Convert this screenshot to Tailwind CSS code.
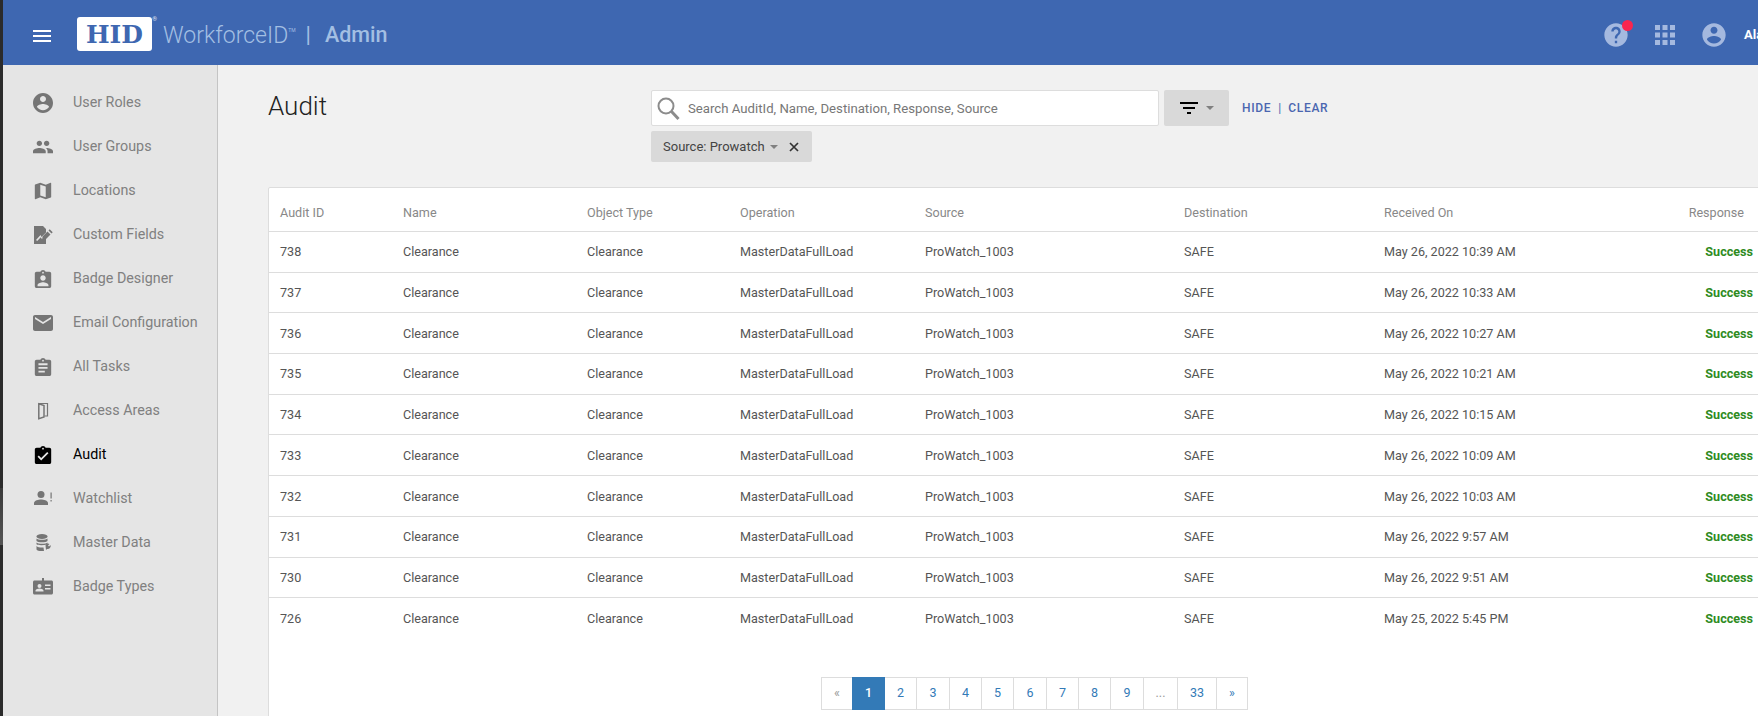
<!DOCTYPE html>
<html lang="en">
<head>
  <meta charset="UTF-8">
  <title>WorkforceID Admin - Audit</title>
  <script src="https://cdn.jsdelivr.net/npm/@tailwindcss/browser@4"></script>
</head>
<body class="h-[716px] w-[1758px] overflow-hidden bg-[#f1f1f1] font-['Roboto',sans-serif]">
  <div class="flex h-full">
    <!-- dark strip on the left edge -->
    <div class="flex h-full w-[3px] shrink-0 flex-col bg-[#2b2b2b]">
      <div class="mt-[488px] h-[57px] bg-gradient-to-b from-[#3a3a3a] to-[#555]"></div>
    </div>

    <div class="flex min-w-0 flex-1 flex-col">
      <!-- Header -->
      <header class="flex h-[65px] shrink-0 items-center bg-[#3e67b1] pt-[5px]">
        <svg class="mt-[1px] ml-[30px] h-3 w-[18px]" viewBox="0 0 18 12" fill="#fff"><path d="M0 0h18v2H0zM0 5h18v2H0zM0 10h18v2H0z"/></svg>
        <div class="relative -mt-[2px] ml-[26px] flex h-[34px] w-[75px] items-center justify-center rounded-[3px] bg-white">
          <span class="font-['DejaVu_Serif',serif] text-[25px] leading-none font-black text-[#3e67b1]">HID</span>
          <span class="absolute -top-[1px] -right-[5px] text-[6px] leading-none text-white/80">®</span>
        </div>
        <span class="ml-[11px] text-[23px] leading-none font-light text-[#a3bfe3]">WorkforceID</span>
        <span class="mb-[10px] text-[5px] leading-none text-[#a3bfe3]">TM</span>
        <span class="ml-[10px] text-[22px] leading-none text-[#a3bfe3]">|</span>
        <span class="ml-[14px] text-[21.500px] leading-none font-medium text-[#a3bfe3]">Admin</span>

        <div class="relative mr-[-27px] ml-auto flex items-center">
          <div class="relative">
            <svg class="h-7 w-7" viewBox="0 0 24 24" fill="#a5b9df"><path d="M12 2C6.48 2 2 6.48 2 12s4.48 10 10 10 10-4.48 10-10S17.52 2 12 2zm1 17h-2v-2h2v2zm2.07-7.75l-.9.92C13.45 12.9 13 13.5 13 15h-2v-.5c0-1.1.45-2.1 1.17-2.83l1.24-1.26c.37-.36.59-.86.59-1.41 0-1.1-.9-2-2-2s-2 .9-2 2H8c0-2.21 1.79-4 4-4s4 1.79 4 4c0 .88-.36 1.68-.93 2.25z"/></svg>
            <span class="absolute -top-[1px] -right-[3px] h-[11px] w-[11px] rounded-full bg-[#f9264f]"></span>
          </div>
          <svg class="ml-[25px] h-5 w-5" viewBox="0 0 20 20" fill="#a5b9df"><path d="M0 0h5v5H0zM7.5 0h5v5h-5zM15 0h5v5h-5zM0 7.5h5v5H0zM7.5 7.5h5v5h-5zM15 7.5h5v5h-5zM0 15h5v5H0zM7.5 15h5v5h-5zM15 15h5v5h-5z"/></svg>
          <svg class="ml-[25px] h-7 w-7" viewBox="0 0 24 24" fill="#a5b9df"><path d="M12 2C6.48 2 2 6.48 2 12s4.48 10 10 10 10-4.48 10-10S17.52 2 12 2zm0 3c1.66 0 3 1.34 3 3s-1.34 3-3 3-3-1.34-3-3 1.34-3 3-3zm0 14.2c-2.5 0-4.71-1.28-6-3.22.03-1.99 4-3.08 6-3.08 1.99 0 5.97 1.09 6 3.08-1.29 1.94-3.5 3.22-6 3.22z"/></svg>
          <span class="ml-[16px] w-[41px] text-[13px] font-bold text-white">Alan</span>
        </div>
      </header>

      <div class="flex min-h-0 flex-1">
        <!-- Sidebar -->
        <nav class="h-full w-[215px] shrink-0 border-r border-[#c4c4c4] bg-[#e5e5e5] pt-4 text-[14.3px] text-[#808080]">
          <a class="flex h-11 items-center gap-5 pl-[30px]">
            <svg class="h-5 w-5" viewBox="2 2 20 20" fill="#757575"><path d="M12 2C6.48 2 2 6.48 2 12s4.48 10 10 10 10-4.48 10-10S17.52 2 12 2zm0 3c1.66 0 3 1.34 3 3s-1.34 3-3 3-3-1.34-3-3 1.34-3 3-3zm0 14.2c-2.5 0-4.71-1.28-6-3.22.03-1.99 4-3.08 6-3.08 1.99 0 5.97 1.09 6 3.08-1.29 1.94-3.5 3.22-6 3.22z"/></svg>
            User Roles
          </a>
          <a class="flex h-11 items-center gap-5 pl-[30px]">
            <svg class="h-5 w-5" viewBox="1 1 22 22" fill="#757575"><path d="M16 11c1.66 0 2.99-1.34 2.99-3S17.66 5 16 5c-1.66 0-3 1.34-3 3s1.34 3 3 3zm-8 0c1.66 0 2.99-1.34 2.99-3S9.66 5 8 5C6.34 5 5 6.34 5 8s1.34 3 3 3zm0 2c-2.33 0-7 1.17-7 3.5V19h14v-2.5c0-2.33-4.67-3.5-7-3.5zm8 0c-.29 0-.62.02-.97.05 1.16.84 1.97 1.97 1.97 3.45V19h6v-2.5c0-2.33-4.67-3.5-7-3.5z"/></svg>
            User Groups
          </a>
          <a class="flex h-11 items-center gap-5 pl-[30px]">
            <svg class="h-5 w-5" viewBox="1 2 22 20" fill="#757575"><path d="M20.5 3l-.16.03L15 5.1 9 3 3.36 4.9c-.21.07-.36.25-.36.48V20.5c0 .28.22.5.5.5l.16-.03L9 18.9l6 2.1 5.64-1.9c.21-.07.36-.25.36-.48V3.5c0-.28-.22-.5-.5-.5zM15 19l-6-2.11V5l6 2.11V19z"/></svg>
            Locations
          </a>
          <a class="flex h-11 items-center gap-5 pl-[30px]">
            <svg class="h-5 w-5" viewBox="0 0 20 20" fill="#757575"><path d="M1 1h9l3 3v3.5L8.5 12l-1-2L3 15l1.2 1L7.8 12.2l1.2 2L13 10.5V19H1z"/><path d="M14.5 6.5l3 3-5 5-3.2.3.2-3.3zM15.5 5.5l1.2-1.2 3 3-1.2 1.2z"/></svg>
            Custom Fields
          </a>
          <a class="flex h-11 items-center gap-5 pl-[30px]">
            <svg class="h-5 w-5" viewBox="1 0 22 22" fill="#757575"><path d="M19 3h-4.18C14.4 1.84 13.3 1 12 1c-1.3 0-2.4.84-2.82 2H5c-1.1 0-2 .9-2 2v14c0 1.1.9 2 2 2h14c1.1 0 2-.9 2-2V5c0-1.1-.9-2-2-2zm-7 0c.55 0 1 .45 1 1s-.45 1-1 1-1-.45-1-1 .45-1 1-1zm0 4c1.66 0 3 1.34 3 3s-1.34 3-3 3-3-1.34-3-3 1.34-3 3-3zm6 12H6v-1.4c0-2 4-3.1 6-3.1s6 1.1 6 3.1V19z"/></svg>
            Badge Designer
          </a>
          <a class="flex h-11 items-center gap-5 pl-[30px]">
            <svg class="h-5 w-5" viewBox="2 2 20 20" fill="#757575"><path d="M20 4H4c-1.1 0-1.99.9-1.99 2L2 18c0 1.1.9 2 2 2h16c1.1 0 2-.9 2-2V6c0-1.1-.9-2-2-2zm0 4l-8 5-8-5V6l8 5 8-5v2z"/></svg>
            Email Configuration
          </a>
          <a class="flex h-11 items-center gap-5 pl-[30px]">
            <svg class="h-5 w-5" viewBox="1 0 22 22" fill="#757575"><path d="M19 3h-4.18C14.4 1.84 13.3 1 12 1c-1.3 0-2.4.84-2.82 2H5c-1.1 0-2 .9-2 2v14c0 1.1.9 2 2 2h14c1.1 0 2-.9 2-2V5c0-1.1-.9-2-2-2zm-7 0c.55 0 1 .45 1 1s-.45 1-1 1-1-.45-1-1 .45-1 1-1zm2 14H7v-2h7v2zm3-4H7v-2h10v2zm0-4H7V7h10v2z"/></svg>
            All Tasks
          </a>
          <a class="flex h-11 items-center gap-5 pl-[30px]">
            <svg class="h-5 w-5" viewBox="0 0 20 20" fill="none" stroke="#757575"><path d="M6 2.500h8.500v12.500H11.500" stroke-width="1.200"/><path d="M5.800 2.800v15l5.200-1.800V4.500z" stroke-width="1.500"/></svg>
            Access Areas
          </a>
          <a class="flex h-11 items-center gap-5 pl-[30px] text-black">
            <svg class="h-5 w-5" viewBox="1 0 22 22" fill="#000"><path d="M19 3h-4.18C14.4 1.84 13.3 1 12 1c-1.3 0-2.4.84-2.82 2H5c-1.1 0-2 .9-2 2v14c0 1.1.9 2 2 2h14c1.1 0 2-.9 2-2V5c0-1.1-.9-2-2-2zm-7 0c.55 0 1 .45 1 1s-.45 1-1 1-1-.45-1-1 .45-1 1-1zm-2 14l-4-4 1.41-1.41L10 14.17l6.59-6.59L18 9l-8 8z"/></svg>
            Audit
          </a>
          <a class="flex h-11 items-center gap-5 pl-[30px]">
            <svg class="h-5 w-5" viewBox="0 0 20 20" fill="#757575"><circle cx="8" cy="5.5" r="3.5"/><path d="M1 16v-2c0-2.4 4.6-3.5 7-3.5s7 1.1 7 3.5v2z"/><path d="M17.5 3.500h1.200v6h-1.200zM17.5 11h1.200v1.600h-1.200z"/></svg>
            Watchlist
          </a>
          <a class="flex h-11 items-center gap-5 pl-[30px]">
            <svg class="h-5 w-5" viewBox="0 0 20 20" fill="#757575"><ellipse cx="9" cy="3.5" rx="5.5" ry="2.5"/><path d="M3.5 5.5c1 1.7 10 1.7 11 0V8c-1 1.7-10 1.700-11 0zM3.5 9.5c1 1.7 10 1.7 11 0v2c-5 1-9 1-11-.2zM3.500 13c1 1.500 5 1.800 7 1.500l.5 3.500c-3 .3-7 0-7.500-1.500z"/><path d="M12.500 12.500a3 3 0 0 1 4-1.500l-1.500 1.500 1 1 1.500-1.500a3 3 0 0 1-3.500 4l-1 1z"/></svg>
            Master Data
          </a>
          <a class="flex h-11 items-center gap-5 pl-[30px]">
            <svg class="h-5 w-5" viewBox="0 0 20 20" fill="#757575" fill-rule="evenodd"><path d="M1.500 3.500h7.500V1h2v2.500h7.500c.8 0 1.500.7 1.500 1.500v11c0 .8-.7 1.500-1.500 1.500h-17C.700 17.500 0 16.800 0 16V5c0-.8.700-1.500 1.500-1.500zM6.500 7a2 2 0 1 0 0 4 2 2 0 0 0 0-4zM2.500 14.500h8v-1c0-1.300-2.700-2-4-2s-4 .7-4 2zM12 7.500v1.500h5.500V7.500zM12 11v1.500h5.500V11z"/></svg>
            Badge Types
          </a>
        </nav>

        <!-- Main -->
        <main class="min-w-0 flex-1 pt-[25px] pl-[50px]">
          <div class="flex h-[97px]">
            <h1 class="w-[383px] pt-[1px] text-[26px] leading-[30px] font-light text-[#222]">Audit</h1>
            <div>
              <div class="flex items-center">
                <div class="flex h-9 w-[508px] items-center rounded-[2px] border border-[#ddd] bg-white pl-[3px]">
                  <svg class="h-[27px] w-[27px]" viewBox="0 0 27 27" fill="none" stroke="#8c8c8c"><circle cx="11" cy="11" r="7.500" stroke-width="2"/><path d="M16.500 16.500l7 7.500" stroke-width="3"/></svg>
                  <input class="mt-[2px] ml-[6px] w-[450px] text-[13.200px] outline-none placeholder:text-[#777]" placeholder="Search AuditId, Name, Destination, Response, Source">
                </div>
                <button class="ml-[5px] flex h-9 w-[65px] items-center justify-center gap-[8px] rounded-[2px] bg-[#d9d9d9]">
                  <svg class="h-[12px] w-[18px]" viewBox="0 0 18 12" fill="#000"><path d="M0 0h18v2H0zM3 5h12v2H3zM7 10h4v2H7z"/></svg>
                  <span class="h-0 w-0 border-x-[4px] border-t-[4px] border-x-transparent border-t-[#808080]"></span>
                </button>
                <a class="ml-[13px] text-[12px] font-medium tracking-[0.7px] text-[#4a66b0]">HIDE</a>
                <span class="mx-[7px] text-[12px] text-[#4a66b0]">|</span>
                <a class="text-[12px] font-medium tracking-[0.7px] text-[#4a66b0]">CLEAR</a>
              </div>
              <div class="mt-[5px] flex h-[31px] w-[161px] items-center rounded-[2px] bg-[#d9d9d9] pl-[12px] text-[13px] text-[#444]">
                Source: Prowatch
                <span class="ml-[5px] h-0 w-0 border-x-[4px] border-t-[4px] border-x-transparent border-t-[#808080]"></span>
                <svg class="ml-[11px] h-[10px] w-[10px]" viewBox="0 0 10 10" stroke="#333" stroke-width="1.700"><path d="M1 1l8 8M9 1l-8 8"/></svg>
              </div>
            </div>
          </div>

          <!-- Audit table card -->
          <section class="h-[700px] w-[1600px] rounded-[2px] border border-[#ddd] bg-white">
            <div class="grid h-[44px] grid-cols-[123px_184px_153px_185px_259px_200px_200px_169px] items-center border-b border-[#ddd] pt-[7px] pl-[11px] text-[12.600px] text-[#888]">
              <span>Audit ID</span><span>Name</span><span>Object Type</span><span>Operation</span><span>Source</span><span>Destination</span><span>Received On</span><span class="pr-[9px] text-right">Response</span>
            </div>
            <div class="grid h-[40.700px] grid-cols-[123px_184px_153px_185px_259px_200px_200px_169px] items-center border-b border-[#ddd] pt-[2px] pl-[11px] text-[12.600px] text-[#555]">
              <span>738</span><span>Clearance</span><span>Clearance</span><span>MasterDataFullLoad</span><span>ProWatch_1003</span><span>SAFE</span><span>May 26, 2022 10:39 AM</span><span class="text-right font-bold text-[#2e8b22]">Success</span>
            </div>
            <div class="grid h-[40.700px] grid-cols-[123px_184px_153px_185px_259px_200px_200px_169px] items-center border-b border-[#ddd] pt-[2px] pl-[11px] text-[12.600px] text-[#555]">
              <span>737</span><span>Clearance</span><span>Clearance</span><span>MasterDataFullLoad</span><span>ProWatch_1003</span><span>SAFE</span><span>May 26, 2022 10:33 AM</span><span class="text-right font-bold text-[#2e8b22]">Success</span>
            </div>
            <div class="grid h-[40.700px] grid-cols-[123px_184px_153px_185px_259px_200px_200px_169px] items-center border-b border-[#ddd] pt-[2px] pl-[11px] text-[12.600px] text-[#555]">
              <span>736</span><span>Clearance</span><span>Clearance</span><span>MasterDataFullLoad</span><span>ProWatch_1003</span><span>SAFE</span><span>May 26, 2022 10:27 AM</span><span class="text-right font-bold text-[#2e8b22]">Success</span>
            </div>
            <div class="grid h-[40.700px] grid-cols-[123px_184px_153px_185px_259px_200px_200px_169px] items-center border-b border-[#ddd] pt-[2px] pl-[11px] text-[12.600px] text-[#555]">
              <span>735</span><span>Clearance</span><span>Clearance</span><span>MasterDataFullLoad</span><span>ProWatch_1003</span><span>SAFE</span><span>May 26, 2022 10:21 AM</span><span class="text-right font-bold text-[#2e8b22]">Success</span>
            </div>
            <div class="grid h-[40.700px] grid-cols-[123px_184px_153px_185px_259px_200px_200px_169px] items-center border-b border-[#ddd] pt-[2px] pl-[11px] text-[12.600px] text-[#555]">
              <span>734</span><span>Clearance</span><span>Clearance</span><span>MasterDataFullLoad</span><span>ProWatch_1003</span><span>SAFE</span><span>May 26, 2022 10:15 AM</span><span class="text-right font-bold text-[#2e8b22]">Success</span>
            </div>
            <div class="grid h-[40.700px] grid-cols-[123px_184px_153px_185px_259px_200px_200px_169px] items-center border-b border-[#ddd] pt-[2px] pl-[11px] text-[12.600px] text-[#555]">
              <span>733</span><span>Clearance</span><span>Clearance</span><span>MasterDataFullLoad</span><span>ProWatch_1003</span><span>SAFE</span><span>May 26, 2022 10:09 AM</span><span class="text-right font-bold text-[#2e8b22]">Success</span>
            </div>
            <div class="grid h-[40.700px] grid-cols-[123px_184px_153px_185px_259px_200px_200px_169px] items-center border-b border-[#ddd] pt-[2px] pl-[11px] text-[12.600px] text-[#555]">
              <span>732</span><span>Clearance</span><span>Clearance</span><span>MasterDataFullLoad</span><span>ProWatch_1003</span><span>SAFE</span><span>May 26, 2022 10:03 AM</span><span class="text-right font-bold text-[#2e8b22]">Success</span>
            </div>
            <div class="grid h-[40.700px] grid-cols-[123px_184px_153px_185px_259px_200px_200px_169px] items-center border-b border-[#ddd] pt-[2px] pl-[11px] text-[12.600px] text-[#555]">
              <span>731</span><span>Clearance</span><span>Clearance</span><span>MasterDataFullLoad</span><span>ProWatch_1003</span><span>SAFE</span><span>May 26, 2022 9:57 AM</span><span class="text-right font-bold text-[#2e8b22]">Success</span>
            </div>
            <div class="grid h-[40.700px] grid-cols-[123px_184px_153px_185px_259px_200px_200px_169px] items-center border-b border-[#ddd] pt-[2px] pl-[11px] text-[12.600px] text-[#555]">
              <span>730</span><span>Clearance</span><span>Clearance</span><span>MasterDataFullLoad</span><span>ProWatch_1003</span><span>SAFE</span><span>May 26, 2022 9:51 AM</span><span class="text-right font-bold text-[#2e8b22]">Success</span>
            </div>
            <div class="grid h-[40.700px] grid-cols-[123px_184px_153px_185px_259px_200px_200px_169px] items-center pt-[2px] pl-[11px] text-[12.600px] text-[#555]">
              <span>726</span><span>Clearance</span><span>Clearance</span><span>MasterDataFullLoad</span><span>ProWatch_1003</span><span>SAFE</span><span>May 25, 2022 5:45 PM</span><span class="text-right font-bold text-[#2e8b22]">Success</span>
            </div>

            <!-- Pagination -->
            <div class="mt-[38px] ml-[553px] flex h-[33px] w-fit text-[12.500px] text-[#337ab7] [&>a]:-ml-px [&>a]:flex [&>a]:items-center [&>a]:justify-center [&>a]:border [&>a]:border-[#ddd]">
              <a class="w-[32px] text-[#999]">«</a>
              <a class="z-10 w-[33px] border-[#337ab7]! bg-[#337ab7] font-medium text-white">1</a>
              <a class="w-[33px]">2</a>
              <a class="w-[34px]">3</a>
              <a class="w-[33px]">4</a>
              <a class="w-[33px]">5</a>
              <a class="w-[34px]">6</a>
              <a class="w-[33px]">7</a>
              <a class="w-[33px]">8</a>
              <a class="w-[34px]">9</a>
              <a class="w-[35px] text-[#999]">...</a>
              <a class="w-[40px]">33</a>
              <a class="w-[32px]">»</a>
            </div>
          </section>
        </main>
      </div>
    </div>
  </div>
</body>
</html>
